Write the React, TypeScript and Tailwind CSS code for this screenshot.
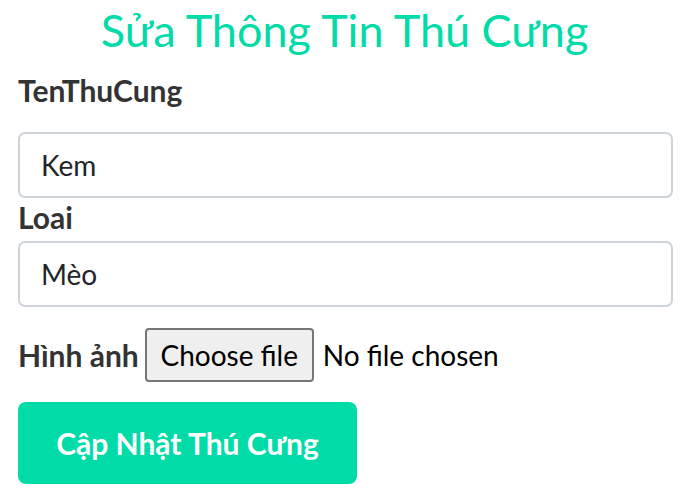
export default function App() {
  return (
    <div className="min-h-screen bg-white px-[18px] font-['Lato',sans-serif] text-[#212529]">
      <h2 className="pt-[2px] text-center text-[45px] font-normal leading-[57px] text-[#00dba8]">
        Sửa Thông Tin Thú Cưng
      </h2>

      <form className="flex flex-col">
        <label className="mt-[13px] text-[30px] font-bold leading-[36px] text-[#333]">TenThuCung</label>
        <input
          defaultValue="Kem"
          className="mt-[24px] h-[66px] w-[655px] rounded-[7px] border-2 border-[#ced4da] px-[21px] text-[28px] text-[#212529] outline-none"
        />

        <label className="mt-[1px] text-[30px] font-bold leading-[36px] text-[#333]">Loai</label>
        <input
          defaultValue="Mèo"
          className="mt-[6px] h-[66px] w-[655px] rounded-[7px] border-2 border-[#ced4da] px-[21px] text-[28px] text-[#212529] outline-none"
        />

        <div className="mt-[21px] flex items-center gap-[6px]">
          <span className="text-[30px] font-bold text-[#333]">Hình ảnh</span>
          <div className="flex items-center gap-[9px]">
            <button
              type="button"
              className="h-[54px] w-[169px] rounded-[4px] border-2 border-[#767676] bg-[#efefef] text-[28px] text-black"
            >
              Choose file
            </button>
            <span className="text-[28px] text-black">No file chosen</span>
          </div>
        </div>

        <button
          type="button"
          className="mt-[20px] h-[82px] w-[339px] rounded-[8px] bg-[#00dba8] text-[30px] font-bold text-white"
        >
          Cập Nhật Thú Cưng
        </button>
      </form>
    </div>
  );
}
